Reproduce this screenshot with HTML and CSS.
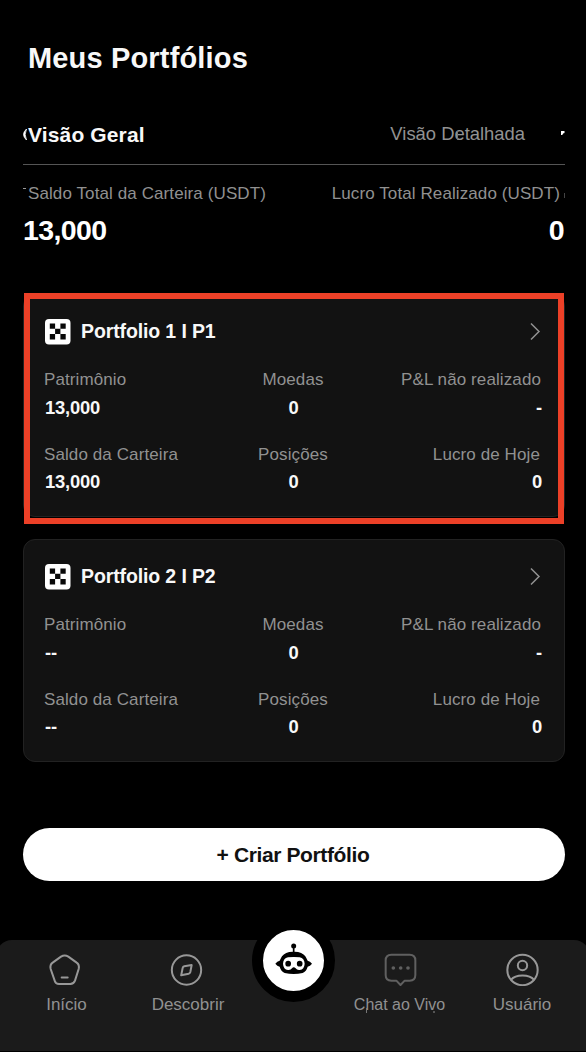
FILE: index.html
```
<!DOCTYPE html>
<html lang="pt">
<head>
<meta charset="utf-8">
<title>Meus Portfólios</title>
<link rel="stylesheet" href="styles.css">
</head>
<body>
<main class="page">
  <h1 class="title">Meus Portfólios</h1>
  <div class="tabs">
    <svg class="mark mark-o" width="5" height="14" viewBox="0 0 5 14"><path d="M3.500 1Q-2.500 6.500 3.500 12Q.8 6.500 3.500 1Z" fill="#fff" stroke="#fff" stroke-width=".8"/></svg>
    <span class="tab active">Visão Geral</span>
    <span class="tab detail">Visão Detalhada<i class="mark mark-p"></i></span>
    <svg class="mark mark-r" width="4" height="5" viewBox="0 0 4 5"><path d="M0 0H3.500V2Q1.800 2 1.300 4H0Z" fill="#fff"/></svg>
  </div>
  <section class="stats">
    <i class="mark mark-t"></i><i class="mark mark-e"></i>
    <div class="stat"><span class="label">Saldo Total da Carteira (USDT)</span><strong class="total">13,000</strong></div>
    <div class="stat right"><span class="label">Lucro Total Realizado (USDT)</span><strong class="total">0</strong></div>
  </section>

  <section class="card selected">
    <header class="card-head">
      <svg width="26" height="26" viewBox="0 0 26 26"><rect width="25.500" height="25.500" rx="4" fill="#fff"/><path fill="#080808" d="M4.800 4.500h5.300v5.300h5.300v-5.300h5.300v5.300h-5.300v5.300h5.300v5.300h-5.300v-5.300h-5.300v5.300h-5.300v-5.300h5.300v-5.300h-5.300z"/></svg>
      <h2 class="name">Portfolio 1 I P1</h2>
      <svg class="chevron" width="11" height="19" viewBox="0 0 11 19"><path d="M1 1.500 9 9.500 1 17.500"/></svg>
    </header>
    <div class="grid">
      <div class="cell"><span class="label">Patrimônio</span><b class="value">13,000</b></div>
      <div class="cell mid"><span class="label">Moedas</span><b class="value">0</b></div>
      <div class="cell end"><span class="label">P&amp;L não realizado</span><b class="value">-</b></div>
      <div class="cell low"><span class="label">Saldo da Carteira</span><b class="value">13,000</b></div>
      <div class="cell low mid"><span class="label">Posições</span><b class="value">0</b></div>
      <div class="cell low end"><span class="label">Lucro de Hoje</span><b class="value">0</b></div>
    </div>
  </section>

  <section class="card">
    <header class="card-head">
      <svg width="26" height="26" viewBox="0 0 26 26"><rect width="25.500" height="25.500" rx="4" fill="#fff"/><path fill="#080808" d="M4.800 4.500h5.300v5.300h5.300v-5.300h5.300v5.300h-5.300v5.300h5.300v5.300h-5.300v-5.300h-5.300v5.300h-5.300v-5.300h5.300v-5.300h-5.300z"/></svg>
      <h2 class="name">Portfolio 2 I P2</h2>
      <svg class="chevron" width="11" height="19" viewBox="0 0 11 19"><path d="M1 1.500 9 9.500 1 17.500"/></svg>
    </header>
    <div class="grid">
      <div class="cell"><span class="label">Patrimônio</span><b class="value">--</b></div>
      <div class="cell mid"><span class="label">Moedas</span><b class="value">0</b></div>
      <div class="cell end"><span class="label">P&amp;L não realizado</span><b class="value">-</b></div>
      <div class="cell low"><span class="label">Saldo da Carteira</span><b class="value">--</b></div>
      <div class="cell low mid"><span class="label">Posições</span><b class="value">0</b></div>
      <div class="cell low end"><span class="label">Lucro de Hoje</span><b class="value">0</b></div>
    </div>
  </section>

  <button class="create">+ Criar Portfólio</button>
</main>

<nav class="nav">
  <a class="item home">
    <svg class="icon" viewBox="144 99 99 99"><path d="M183 110Q194 103 205 110L230 128Q239 134 236 147L225 182Q221 192 211 192H177Q167 192 164 182L152 147Q149 134 158 128ZM185 172.500H203"/></svg>
    <span class="label">Início</span>
  </a>
  <a class="item discover">
    <svg class="icon" viewBox="510 99 99 99"><circle cx="559.500" cy="150" r="44"/><path d="M575 135 553 139Q549 140 548 144L543.500 166 566 161Q570 160 571 156Z"/></svg>
    <span class="label">Descobrir</span>
  </a>
  <a class="item bot">
    <span class="bot-disc">
      <svg width="40" height="37" viewBox="131 82 120 111">
        <circle cx="190" cy="94" r="7.500"/>
        <path d="M187.500 98h5v13q23.500 0 32.500 14 4 7 7 13l7 3 6 6-6 6-7 3q-4 14-15 19-27 6-54 0-11-5-15-19l-7-3-6-6 6-6 7-3q3-6 7-13 9-14 32.500-14z"/>
        <path fill="#fff" d="M173 128Q190 126 208 128 222 131 223 147 222 164 208 166 200 167 196 161 190 154 185 161 181 167 173 166 159 164 158 147 159 131 173 128Z"/>
        <circle cx="173.500" cy="147" r="8.500"/><circle cx="208" cy="147" r="8.500"/>
      </svg>
    </span>
  </a>
  <a class="item chat">
    <svg class="icon" viewBox="132 99 99 99"><path d="M154 104H209Q226 104 226 121V165Q226 182 209 182H194L181.500 195 169 182H154Q137 182 137 165V121Q137 104 154 104Z"/><g class="dots"><circle cx="160" cy="144" r="5.500"/><circle cx="182" cy="144" r="5.500"/><circle cx="204" cy="144" r="5.500"/></g></svg>
    <span class="label">Chat ao Vivo<i class="mark mark-h"></i><i class="mark mark-y"></i></span>
  </a>
  <a class="item user">
    <svg class="icon" viewBox="497.500 99 99 99"><circle cx="547" cy="150" r="45.500"/><circle cx="547" cy="136.500" r="14"/><path d="M513 179C526 162 568 162 581 179"/></svg>
    <span class="label">Usuário</span>
  </a>
</nav>
</body>
</html>
```
FILE: styles.css
```
*, *::after { box-sizing: border-box; }
body {
  margin: 0;
  height: 1052px;
  background: #000;
  color: #f8f8f8;
  font-family: "Liberation Sans", Arial, sans-serif;
  overflow: hidden;
  display: flex;
  flex-direction: column;
}
.page { height: 940px; padding: 42px 21px 0 23px; flex: none; }
.title { margin: 0 0 0 5px; font-size: 29px; line-height: 32px; letter-spacing: .16px; }
.mark { position: absolute; }
.tabs {
  position: relative;
  margin-top: 48px;
  height: 43px;
  padding: 0 40px 0 5px;
  border-bottom: 1px solid #555;
  display: flex;
  justify-content: space-between;
}
.tab { line-height: 24px; white-space: nowrap; }
.active { font-size: 21px; font-weight: bold; letter-spacing: .14px; padding-top: 1px; }
.detail { position: relative; font-size: 18.4px; color: #929292; }
.mark-o { left: 0; top: 6px; }
.mark-r { left: 538px; top: 9px; }
.mark-p { left: 67px; top: 9px; width: 1px; height: 9px; background: #777; }
.mark-t { left: 0; top: 4px; width: 3px; height: 1px; background: #999; }
.mark-e { left: 541px; top: 9px; width: 1px; height: 5px; background: #444; }
.stats { position: relative; margin-top: 19px; height: 63px; display: flex; justify-content: space-between; }
.stat { display: flex; flex-direction: column; }
.stat .label { margin: 0 5px 0 5px; }
.label { font-size: 17px; line-height: 20px; letter-spacing: .1px; color: #919191; white-space: nowrap; }
.total { margin-top: 10px; font-size: 28.5px; line-height: 32px; letter-spacing: -.6px; color: #fff; }
.right .total { text-align: right; padding-right: 1px; }
.card {
  position: relative;
  height: 223px;
  margin-bottom: 22px;
  padding: 24px 23px 0 20px;
  border: 1px solid #222;
  border-radius: 12px;
  background: #121212;
}
.stats + .card { margin-top: 47px; }
.selected::after {
  content: "";
  position: absolute;
  left: 0;
  top: -2px;
  width: 540px;
  height: 231px;
  border: 6px solid #ec4027;
}
.card-head { height: 25px; padding-left: 1px; display: flex; align-items: center; }
.name { margin: 0 auto 0 10px; padding-bottom: 2px; font-size: 19.5px; line-height: 26px; letter-spacing: -.12px; }
.chevron { fill: none; stroke: #929292; stroke-width: 1.5; }
.grid { margin-top: 26px; display: grid; grid-template-columns: 166px 166px 166px; row-gap: 25px; }
.cell { display: flex; flex-direction: column; }
.value { margin-top: 6px; font-size: 18.4px; line-height: 23px; margin-bottom: 1px; padding-left: 1px; letter-spacing: -.2px; }
.low .value { margin-top: 5px; }
.mid { align-items: center; }
.end { align-items: flex-end; }
.end .label { margin-right: 1px; }
.low.end .label { margin-right: 2px; }
.create {
  display: block;
  width: 542px;
  height: 53px;
  margin-top: 66px;
  padding: 1px 2px 0 0;
  border: 0;
  border-radius: 27px;
  background: #fff;
  color: #111;
  font: bold 21px/52px "Liberation Sans", Arial, sans-serif;
  letter-spacing: -.38px;
}
.nav {
  flex: none;
  width: 594px;
  height: 111px;
  margin-left: -4px;
  padding-left: 4px;
  border-radius: 16px 16px 0 0;
  background: #1b1b1b;
  display: grid;
  grid-template-columns: 133px 110px 101px 111px 134px;
}
.item { display: flex; flex-direction: column; align-items: center; padding-top: 13px; }
.icon { width: 33px; height: 33px; fill: none; stroke: #989898; stroke-width: 6; stroke-linecap: round; stroke-linejoin: round; }
.item .label { position: relative; margin-top: 9px; letter-spacing: 0; }
.home .icon { margin-right: 4px; }
.discover .icon { margin-right: 3px; }
.chat .icon { margin-left: 2px; stroke: #606060; }
.chat .label { font-size: 16px; }
.dots { fill: #606060; stroke: none; }
.mark-h { left: 12px; top: 13px; width: 1px; height: 5px; background: #777; }
.mark-y { left: 79px; top: 16px; width: 2px; height: 2px; background: #555; }
.bot { padding-top: 0; }
.bot-disc {
  width: 83px;
  height: 83px;
  margin-top: -21px;
  border: 11px solid #000;
  border-radius: 50%;
  background: #fff;
  display: flex;
  justify-content: center;
  padding-top: 12px;
}
```
